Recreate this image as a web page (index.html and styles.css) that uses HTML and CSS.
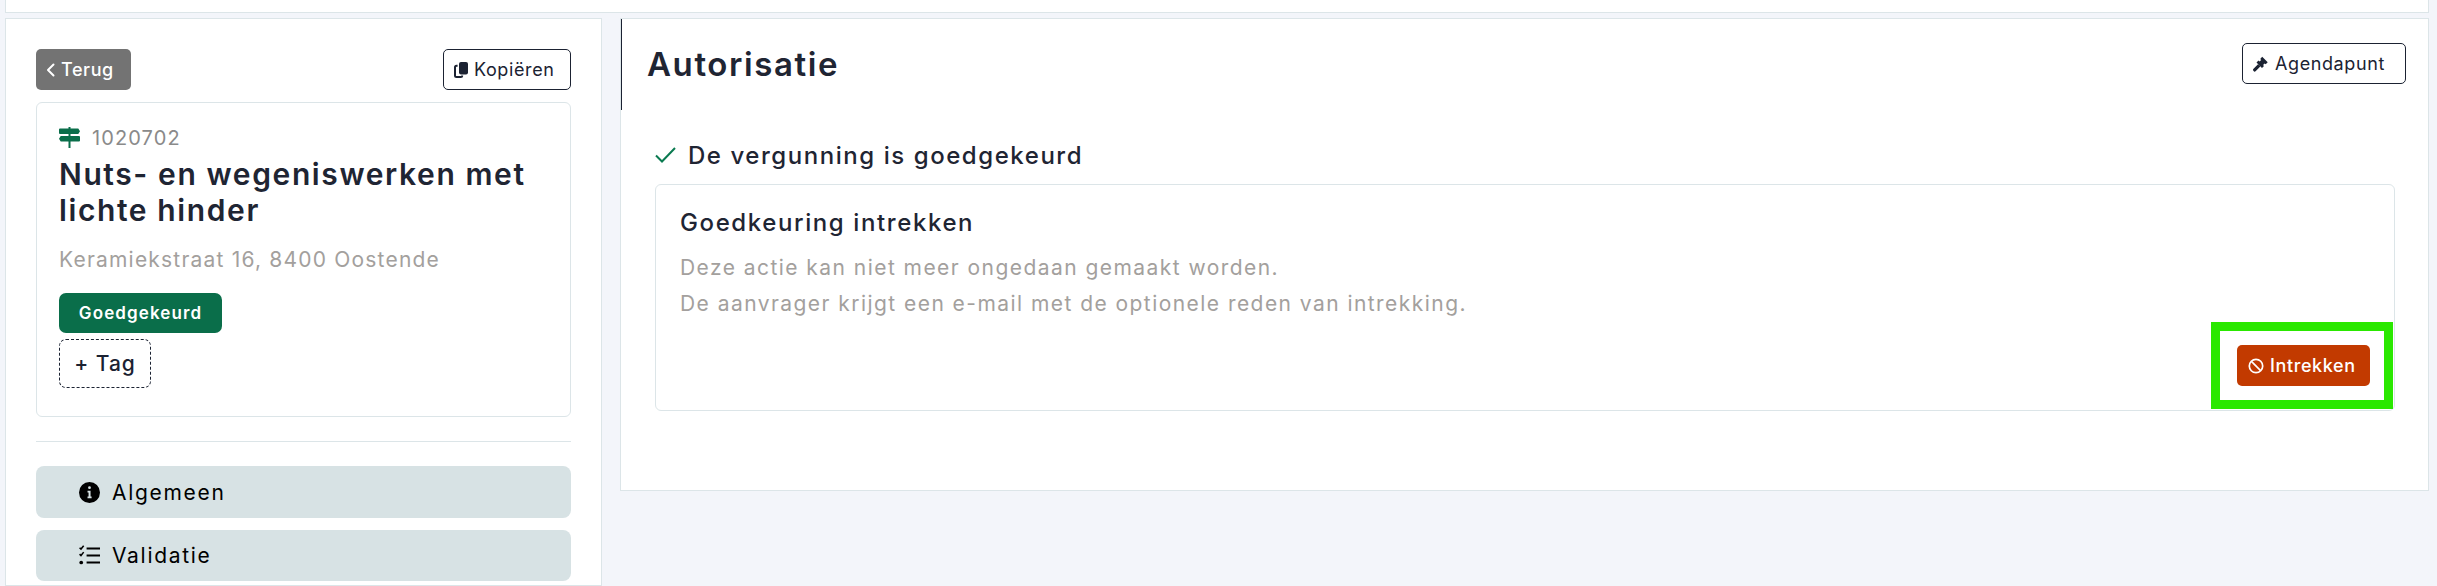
FILE: index.html
```html
<!DOCTYPE html>
<html lang="nl">
<head>
  <meta charset="UTF-8">
  <title>Autorisatie</title>
  <link rel="stylesheet" href="styles.css">
</head>
<body>
  <div class="topbar"></div>

  <div class="layout">
    <aside class="sidebar">
      <div class="sidebar-actions">
        <button class="btn btn-back">
          <svg class="icon-back" viewBox="0 0 9 14"><path d="M7.500 1.500 2 7l5.500 5.500" fill="none" stroke="currentColor" stroke-width="2" stroke-linecap="round" stroke-linejoin="round"/></svg>
          Terug
        </button>
        <button class="btn btn-outline btn-copy">
          <svg class="icon-copy" viewBox="0 0 14 16"><path d="M7 0h5a2 2 0 0 1 2 2v8.500a2 2 0 0 1-2 2H7a2 2 0 0 1-2-2V2a2 2 0 0 1 2-2Z" fill="currentColor"/><path d="M3.600 3.800H2.500A1.500 1.500 0 0 0 1 5.300v8.200A1.500 1.500 0 0 0 2.500 15h4.200a1.500 1.500 0 0 0 1.500-1.500" fill="none" stroke="currentColor" stroke-width="2"/></svg>
          Kopiëren
        </button>
      </div>

      <div class="card permit">
        <div class="permit-id">
          <svg class="icon-sign" viewBox="0 0 21 21"><path d="M9.500 0h2v1.500h7.800l1.700 2.800-1.700 2.700H1a1 1 0 0 1-1-1V2.500a1 1 0 0 1 1-1h8.500ZM1.700 9H20a1 1 0 0 1 1 1v3.500a1 1 0 0 1-1 1H1.700L0 11.800Zm7.800 5.500h2V21h-2Zm0-7.500h2v2h-2Z" fill="#0a6e4a"/></svg>
          <span>1020702</span>
        </div>
        <h2 class="permit-title">Nuts- en wegeniswerken met lichte hinder</h2>
        <p class="permit-address">Keramiekstraat 16, 8400 Oostende</p>
        <span class="badge">Goedgekeurd</span>
        <button class="tag-add">+ Tag</button>
      </div>

      <hr class="divider">

      <a class="nav-item">
        <svg class="icon-nav" viewBox="0 0 18 18"><path fill-rule="evenodd" d="M9 0a9 9 0 1 1 0 18A9 9 0 0 1 9 0Zm0 3.700a1.200 1.200 0 1 0 0 2.400 1.200 1.200 0 0 0 0-2.400ZM7.300 7.600v1.500h.9v3.300h-.9v1.500h3.500v-1.500h-.9V7.600Z"/></svg>
        Algemeen
      </a>
      <a class="nav-item">
        <svg class="icon-nav" viewBox="0 0 18 18"><path d="M.5 2.300 1.700 3.500 4 .6M.5 7.800 1.700 9 4 6.100" fill="none" stroke="#000" stroke-width="1.300"/><circle cx="1.900" cy="15" r="1.600"/><path d="M6.500 2.200H18v1.600H6.500Zm0 6H18v1.600H6.500Zm0 6H18v1.600H6.500Z"/></svg>
        Validatie
      </a>
    </aside>

    <main class="content">
      <header class="content-head">
        <h1>Autorisatie</h1>
        <button class="btn btn-outline btn-agenda">
          <svg class="icon" viewBox="0 0 16 16"><path d="M9.200.8l5.500 5.500-2 2-1-.9-1.700 1.700 1 1-2 2-5.500-5.500 2-2 1 1L8.200 3.900l-1-1ZM5 8.300l2.300 2.300-4.500 4.500a1.400 1.400 0 0 1-2.300-.3 1.400 1.400 0 0 1 0-2Z" fill="currentColor"/></svg>
          Agendapunt
        </button>
      </header>

      <div class="status">
        <svg class="icon-check" viewBox="0 0 21 16"><path d="M1 8.500 7 14.500 20 1" fill="none" stroke="#0a7a50" stroke-width="2"/></svg>
        De vergunning is goedgekeurd
      </div>

      <section class="card revoke">
        <h3>Goedkeuring intrekken</h3>
        <p>Deze actie kan niet meer ongedaan gemaakt worden.</p>
        <p>De aanvrager krijgt een e-mail met de optionele reden van intrekking.</p>
        <div class="revoke-actions">
          <div class="highlight">
            <button class="btn btn-danger">
              <svg class="icon" viewBox="0 0 16 16"><circle cx="8" cy="8" r="6.700" fill="none" stroke="currentColor" stroke-width="1.700"/><path d="M3.400 3.400l9.200 9.200" stroke="currentColor" stroke-width="1.700"/></svg>
              Intrekken
            </button>
          </div>
        </div>
      </section>
    </main>
  </div>
</body>
</html>
```

FILE: styles.css
```css
* {
  box-sizing: border-box;
  margin: 0;
  padding: 0;
}

html, body {
  height: 586px;
  overflow: hidden;
}

body {
  background: #f3f5fa;
  color: #1f2533;
  font-family: Inter, "Liberation Sans", sans-serif;
  padding: 0 8px 0 5px;
}

.topbar {
  height: 13px;
  background: #fff;
  border: 1px solid #dce5e8;
  border-top: none;
}

.layout {
  display: flex;
  align-items: flex-start;
  gap: 18px;
  margin-top: 5px;
}

.sidebar {
  flex: none;
  width: 597px;
  height: 568px;
  background: #fff;
  border: 1px solid #dce5e8;
  padding: 30px 30px 0;
}

.sidebar-actions {
  display: flex;
  justify-content: space-between;
  margin-bottom: 12px;
}

.btn {
  display: inline-flex;
  align-items: center;
  gap: 6px;
  height: 41px;
  border-radius: 5px;
  border: 1px solid transparent;
  font-family: inherit;
  font-size: 18px;
  letter-spacing: 0.6px;
  background: none;
}

.btn-back {
  width: 95px;
  padding-left: 9px;
  background: #737373;
  color: #fff;
  font-weight: 500;
}

.icon-back {
  width: 9px;
  height: 14px;
}

.btn-outline {
  background: #fff;
  border-color: #1b2232;
  color: #1b2232;
}

.btn-copy {
  width: 128px;
  padding-left: 10px;
}

.icon-copy {
  width: 14px;
  height: 16px;
  flex: none;
}

.btn-agenda {
  width: 164px;
  padding-left: 10px;
}

.btn-danger {
  width: 133px;
  padding-left: 10px;
  background: #c23a00;
  color: #fff;
  font-weight: 500;
}

.icon {
  width: 16px;
  height: 16px;
  flex: none;
}

.card {
  background: #fff;
  border: 1px solid #dce5e8;
  border-radius: 6px;
}

.permit {
  height: 315px;
  padding: 24px 22px 0;
}

.permit-id {
  display: flex;
  align-items: center;
  gap: 12px;
  height: 21px;
  color: #8a8a8a;
  font-size: 20px;
  letter-spacing: 1.1px;
}

.icon-sign {
  width: 21px;
  height: 21px;
}

.permit-title {
  margin-top: 8px;
  font-size: 30px;
  font-weight: 600;
  line-height: 36px;
  letter-spacing: 1.6px;
}

.permit-address {
  margin-top: 17px;
  color: #a3a09d;
  font-size: 21px;
  line-height: 30px;
  letter-spacing: 1.2px;
}

.badge {
  display: block;
  width: 163px;
  height: 40px;
  margin-top: 18px;
  background: #0a6e4a;
  border-radius: 7px;
  color: #fff;
  font-size: 17px;
  font-weight: 600;
  line-height: 40px;
  letter-spacing: 1.1px;
  text-align: center;
}

.tag-add {
  display: block;
  width: 92px;
  height: 49px;
  margin-top: 6px;
  background: #fff;
  border: 1px dashed #1b2232;
  border-radius: 7px;
  color: #1b2232;
  font-family: inherit;
  font-size: 21px;
  font-weight: 500;
  letter-spacing: 1px;
}

.divider {
  margin: 24px 0;
  border: none;
  border-top: 1px solid #dce5e8;
}

.nav-item {
  display: flex;
  align-items: center;
  gap: 12px;
  height: 52px;
  margin-bottom: 12px;
  padding-left: 43px;
  background: #d7e2e4;
  border-radius: 8px;
  color: #000;
  font-size: 21px;
  letter-spacing: 1.7px;
}

.nav-item:last-child {
  height: 51px;
}

.icon-nav {
  width: 21px;
  height: 21px;
}

.content {
  position: relative;
  flex: 1;
  height: 473px;
  background: #fff;
  border: 1px solid #dce5e8;
  padding: 24px 22px 0 26px;
}

/* dark edge at the top of the panel */
.content::before {
  content: "";
  position: absolute;
  left: 0;
  top: 0;
  width: 1px;
  height: 91px;
  background: #1b2232;
}

.content-head {
  display: flex;
  justify-content: space-between;
  align-items: center;
  height: 41px;
}

.content-head h1 {
  font-size: 33px;
  font-weight: 600;
  letter-spacing: 1.6px;
}

.status {
  display: flex;
  align-items: center;
  gap: 12px;
  margin-top: 56px;
  padding-left: 8px;
  height: 30px;
  font-size: 24px;
  font-weight: 500;
  letter-spacing: 1.55px;
}

.icon-check {
  width: 21px;
  height: 16px;
}

.revoke {
  display: flex;
  flex-direction: column;
  height: 227px;
  margin: 14px 11px 0 8px;
  padding: 22px 0 2px 24px;
}

.revoke h3 {
  margin-bottom: 11px;
  font-size: 24px;
  font-weight: 500;
  line-height: 32px;
  letter-spacing: 1.6px;
}

.revoke p {
  color: #a3a09d;
  font-size: 21px;
  line-height: 36px;
  letter-spacing: 1.45px;
}

.revoke-actions {
  display: flex;
  justify-content: flex-end;
  margin-top: auto;
  padding-right: 1px;
}

.highlight {
  display: flex;
  align-items: center;
  justify-content: center;
  width: 182px;
  height: 87px;
  background: #fff;
  border: 9px solid #2ae800;
  padding-left: 3px;
}
```
